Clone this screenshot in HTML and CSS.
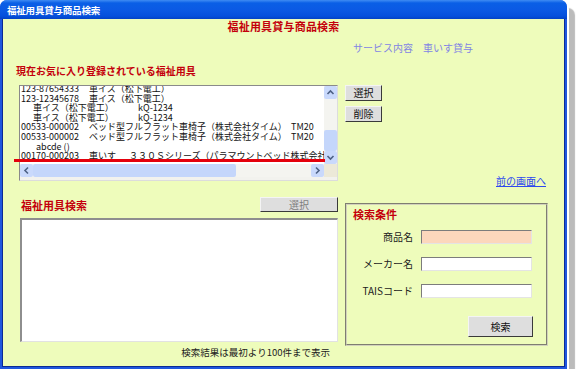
FILE: index.html
```html
<!doctype html>
<html>
<head>
  <meta charset="utf-8">
  <link rel="stylesheet" href="styles.css">
</head>
<body>
  <div class="window">
    <div class="titlebar">福祉用具貸与商品検索</div>
    <div class="client">
      <h1 class="heading">福祉用具貸与商品検索</h1>
      <div class="service">サービス内容　車いす貸与</div>
      <h2 class="label fav-label">現在お気に入り登録されている福祉用具</h2>

      <div class="fav-row">
        <div class="listbox">
          <div class="items">
            <div class="item"><span class="code">123-87654333</span>車イス（松下電工）</div>
            <div class="item"><span class="code">123-12345678</span>車イス（松下電工）</div>
            <div class="item sub"><span class="maker">車イス（松下電工）</span>kQ-1234</div>
            <div class="item sub"><span class="maker">車イス（松下電工）</span>kQ-1234</div>
            <div class="item"><span class="code">00533-000002</span><span class="name">ベッド型フルフラット車椅子（株式会社タイム）</span>TM20</div>
            <div class="item"><span class="code">00533-000002</span><span class="name">ベッド型フルフラット車椅子（株式会社タイム）</span>TM20</div>
            <div class="item plain">abcde ()</div>
            <div class="item"><span class="code">00170-000203</span><span class="kind">車いす</span>３３０Ｓシリーズ（パラマウントベッド株式会社</div>
          </div>
          <div class="vscroll">
            <div class="arrow">
              <svg width="13" height="13" viewBox="0 0 13 13"><polyline points="3.5,8 6.5,5 9.5,8" fill="none" stroke="#4d6185" stroke-width="1.6"/></svg>
            </div>
            <div class="vthumb"></div>
            <div class="arrow">
              <svg width="13" height="13" viewBox="0 0 13 13"><polyline points="3.5,5 6.5,8 9.5,5" fill="none" stroke="#4d6185" stroke-width="1.6"/></svg>
            </div>
          </div>
          <div class="hscroll">
            <div class="arrow">
              <svg width="13" height="13" viewBox="0 0 13 13"><polyline points="8,3.5 5,6.5 8,9.5" fill="none" stroke="#4d6185" stroke-width="1.6"/></svg>
            </div>
            <div class="hthumb"></div>
            <div class="arrow">
              <svg width="13" height="13" viewBox="0 0 13 13"><polyline points="5,3.5 8,6.5 5,9.5" fill="none" stroke="#4d6185" stroke-width="1.6"/></svg>
            </div>
          </div>
          <div class="corner"></div>
        </div>

        <div class="side">
          <div class="side-buttons">
            <button class="btn small">選択</button>
            <button class="btn small">削除</button>
          </div>
          <a class="back" href="#">前の画面へ</a>
        </div>

        <div class="mark"></div>
      </div>

      <div class="lower">
        <div class="results">
          <div class="results-head">
            <h2 class="label">福祉用具検索</h2>
            <button class="btn wide" disabled>選択</button>
          </div>
          <div class="results-box"></div>
          <p class="note">検索結果は最初より100件まで表示</p>
        </div>

        <div class="criteria">
          <h2 class="label criteria-title">検索条件</h2>
          <div class="fields">
            <span class="field-label">商品名</span>
            <input class="field current" type="text">
            <span class="field-label">メーカー名</span>
            <input class="field" type="text">
            <span class="field-label">TAISコード</span>
            <input class="field" type="text">
          </div>
          <div class="search-row">
            <button class="btn search">検索</button>
          </div>
        </div>
      </div>
    </div>
  </div>
</body>
</html>
```

FILE: styles.css
```css
body{
  margin: 0;
  background: #ffffff;
  font-family: "Noto Sans CJK JP", sans-serif;
}
.window{
  width: 567px;
  height: 369px;
  box-sizing: border-box;
  padding: 0 2px 2px;
  background: #1f57de;
  border-radius: 7px 7px 0 0;
  box-shadow: 2px 2px 0 #ffffff, 8px 8px 1px #bbbbbb;
  display: flex;
  flex-direction: column;
}
.titlebar{
  height: 19px;
  margin: 0 -2px;
  padding-left: 7px;
  border-radius: 7px 7px 0 0;
  background: linear-gradient(#3f8cf3 0, #0a5fe6 3px, #0b5ae4 50%, #0550dc 85%, #0342c4 100%);
  color: #ffffff;
  font-size: 9.5px;
  font-weight: bold;
  line-height: 21px;
  letter-spacing: -0.2px;
}
.client{
  flex: 1;
  position: relative;
  border: 1px solid #0b2a96;
  border-top: 0;
  background: #eefcbb;
}
.heading{
  margin: 0;
  text-align: center;
  color: #c4000c;
  font-size: 11px;
  font-weight: bold;
  line-height: 14px;
  letter-spacing: 0.2px;
}
.service{
  margin: 8px 0 0 350px;
  color: #8385e4;
  font-size: 10px;
  line-height: 14px;
}
.label{
  margin: 0;
  color: #c4000c;
  font-size: 11px;
  font-weight: bold;
  line-height: 14px;
}
.fav-label{
  margin-top: 9px;
  padding-left: 13px;
  font-size: 10px;
}

/* favourites list */
.fav-row{
  position: relative;
  display: flex;
  gap: 7px;
  margin: 7px 0 0 16px;
  height: 96px;
}
.listbox{
  width: 319px;
  box-sizing: border-box;
  border: 1px solid;
  border-color: #8a8a8a #dcdcdc #dcdcdc #8a8a8a;
  background: #f2f2ee;
  padding-bottom: 3px;
  display: grid;
  grid-template-columns: 1fr 13px;
  grid-template-rows: 1fr 13px;
}
.items{
  background: #ffffff;
  overflow: hidden;
  white-space: nowrap;
  font-size: 9px;
  color: #111111;
  padding-left: 1px;
}
.item{
  height: 9.6px;
  line-height: 9.6px;
}
.item:first-child{
  margin-top: -2px;
}
.code{
  display: inline-block;
  width: 68px;
}
.sub{
  padding-left: 12px;
}
.maker{
  display: inline-block;
  width: 105px;
}
.name{
  display: inline-block;
  width: 202px;
}
.kind{
  display: inline-block;
  width: 40px;
}
.plain{
  padding-left: 15px;
}
.vscroll{
  background: #f4f4f0;
  display: flex;
  flex-direction: column;
}
.vscroll .arrow:last-child{
  margin-top: auto;
}
.vthumb{
  margin-top: 31px;
  height: 21px;
  background: #c4d6fb;
  border-radius: 2px;
}
.hscroll{
  background: #f4f4f0;
  display: flex;
}
.hthumb{
  width: 203px;
  background: #c4d6fb;
  border-radius: 2px;
}
.hscroll .arrow:last-child{
  margin-left: auto;
}
.arrow{
  width: 13px;
  height: 13px;
  background: #c9d9fc;
  border-radius: 2px;
}
.arrow svg{
  display: block;
}
.corner{
  background: #ece9d8;
}
.side{
  width: 201px;
  display: flex;
  flex-direction: column;
  justify-content: space-between;
}
.side-buttons{
  display: flex;
  flex-direction: column;
  gap: 5px;
}
.back{
  align-self: flex-end;
  margin-bottom: -6px;
  color: #2d49ee;
  font-size: 10px;
  line-height: 12px;
}
.mark{
  position: absolute;
  left: -5px;
  top: 74px;
  width: 311px;
  height: 3px;
  background: #e4000c;
}

/* buttons */
.btn{
  box-sizing: border-box;
  padding: 0;
  font-family: "Noto Sans CJK JP", sans-serif;
  font-size: 10px;
  line-height: 12px;
  color: #111111;
  background: #dedede;
  border: 1px solid;
  border-color: #f4f4f4 #3a3a3a #3a3a3a #f4f4f4;
}
.small{
  width: 37px;
  height: 16px;
}
.wide{
  width: 78px;
  height: 15px;
  color: #7d7d7d;
}
.search{
  width: 65px;
  height: 21px;
}

/* lower half */
.lower{
  display: flex;
  gap: 7px;
  margin: 16px 0 0 17px;
}
.results{
  width: 318px;
}
.results-head{
  height: 15px;
  display: flex;
  justify-content: space-between;
  align-items: center;
}
.results-head .label{
  padding-left: 1px;
}
.results-box{
  margin-top: 6px;
  height: 124px;
  box-sizing: border-box;
  background: #ffffff;
  border-style: solid;
  border-width: 2px 1px 1px 2px;
  border-color: #8e8e8e #e2e2e2 #e2e2e2 #8e8e8e;
}
.note{
  margin: 4px 0 0;
  padding-right: 8px;
  text-align: right;
  font-size: 9.5px;
  line-height: 12px;
  color: #222222;
}
.criteria{
  width: 203px;
  height: 143px;
  margin-top: 6px;
  box-sizing: border-box;
  border: 2px groove #d2d2bc;
}
.criteria-title{
  padding: 2px 0 0 6px;
}
.fields{
  margin-top: 9px;
  display: grid;
  grid-template-columns: 66px 111px;
  column-gap: 8px;
  row-gap: 13px;
}
.field-label{
  text-align: right;
  font-size: 10px;
  line-height: 14px;
  color: #222222;
}
.field{
  box-sizing: border-box;
  width: 111px;
  height: 14px;
  margin: 0;
  padding: 0;
  background: #ffffff;
  border: 1px solid;
  border-color: #7c7c7c #e4e4e4 #e4e4e4 #7c7c7c;
}
.current{
  background: #fcd7bc;
}
.search-row{
  margin-top: 18px;
  padding-right: 13px;
  display: flex;
  justify-content: flex-end;
}
```
